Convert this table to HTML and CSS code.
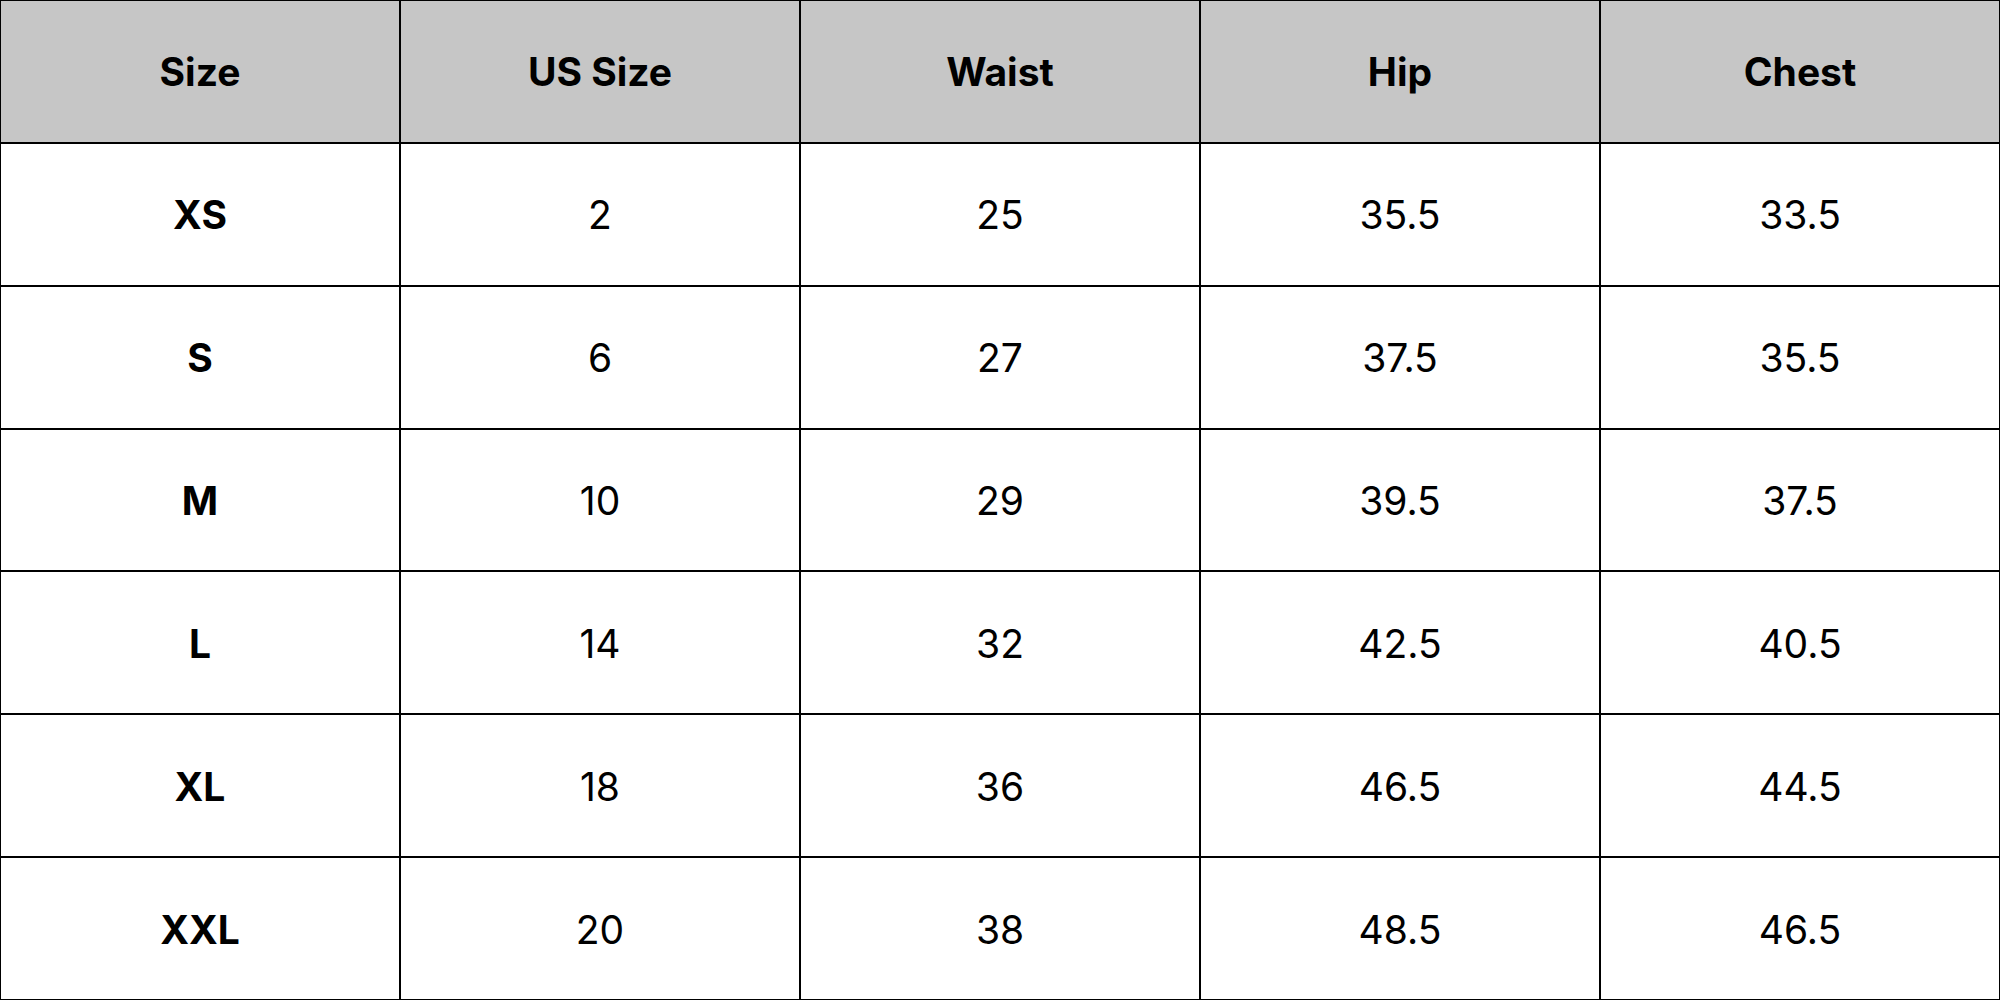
FILE: index.html
```html
<!DOCTYPE html>
<html>
<head>
<meta charset="utf-8">
<link rel="stylesheet" href="styles.css">
</head>
<body>
<div class="chart">
  <div class="cell head">Size</div>
  <div class="cell head">US Size</div>
  <div class="cell head">Waist</div>
  <div class="cell head">Hip</div>
  <div class="cell head">Chest</div>

  <div class="cell label">XS</div>
  <div class="cell">2</div>
  <div class="cell">25</div>
  <div class="cell">35.5</div>
  <div class="cell">33.5</div>

  <div class="cell label">S</div>
  <div class="cell">6</div>
  <div class="cell">27</div>
  <div class="cell">37.5</div>
  <div class="cell">35.5</div>

  <div class="cell label">M</div>
  <div class="cell">10</div>
  <div class="cell">29</div>
  <div class="cell">39.5</div>
  <div class="cell">37.5</div>

  <div class="cell label">L</div>
  <div class="cell">14</div>
  <div class="cell">32</div>
  <div class="cell">42.5</div>
  <div class="cell">40.5</div>

  <div class="cell label">XL</div>
  <div class="cell">18</div>
  <div class="cell">36</div>
  <div class="cell">46.5</div>
  <div class="cell">44.5</div>

  <div class="cell label">XXL</div>
  <div class="cell">20</div>
  <div class="cell">38</div>
  <div class="cell">48.5</div>
  <div class="cell">46.5</div>
</div>
</body>
</html>
```
FILE: styles.css
```css
html, body {
  margin: 0;
  padding: 0;
  background: #ffffff;
}
.chart {
  width: 2000px;
  height: 1000px;
  box-sizing: border-box;
  display: grid;
  grid-template-columns: repeat(5, 1fr);
  grid-template-rows: repeat(7, 1fr);
  gap: 2px;
  padding: 1px;
  background: #000000;
  font-family: "Inter", "Liberation Sans", sans-serif;
  color: #000000;
}
.cell {
  background: #ffffff;
  display: flex;
  align-items: center;
  justify-content: center;
  font-size: 39px;
  font-weight: 400;
  padding-top: 1px;
}
.head {
  background: #c6c6c6;
  font-weight: 650;
}
.label {
  font-weight: 650;
}
```
